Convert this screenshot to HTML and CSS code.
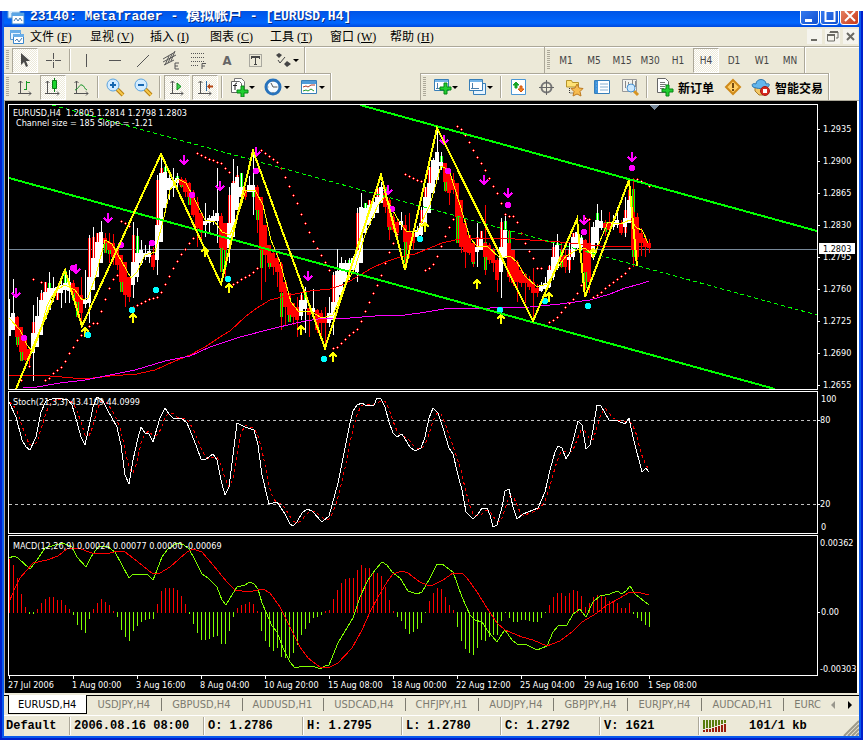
FILE: index.html
```html
<!DOCTYPE html>
<html lang="zh-CN">
  <head>
    <meta charset="UTF-8" />
    <meta name="viewport" content="width=device-width, initial-scale=1.0" />
    <title>MetaTrader - EURUSD,H4</title>
    <link rel="stylesheet" href="styles.css">
  </head>
  <body>
    <div class="window">
      <header class="titlebar">
        <svg class="app-icon" width="18" height="18" viewBox="0 0 18 18"><path d="M1 1h12v10H1z" fill="#dcefff" stroke="#5b9bd5"/><path d="M5 6h12v11H5z" fill="#fff" stroke="#3a86cc"/><path d="M5 6h12v3H5z" fill="#5aa5e6"/><path d="M7 14l2-3 2 3 2-3 2 3" fill="none" stroke="#4a7db0"/></svg>
        <h1 class="title">23140: MetaTrader - <span class="title-cn">模拟帐户</span> - [EURUSD,H4]</h1>
        <div class="window-buttons">
          <button class="win-btn" aria-label="Minimize"><svg width="16" height="16" viewBox="0 0 16 16"><path d="M3 11h7v3H3z" fill="#fff"/></svg></button>
          <button class="win-btn" aria-label="Maximize"><svg width="16" height="16" viewBox="0 0 16 16"><path d="M3.5 3v10h9V3z" fill="none" stroke="#fff" stroke-width="2"/></svg></button>
          <button class="win-btn win-close" aria-label="Close"><svg width="16" height="16" viewBox="0 0 16 16"><path d="M3 3l10 10M13 3L3 13" stroke="#fff" stroke-width="2"/></svg></button>
        </div>
      </header>

      <nav class="menubar">
        <svg class="menu-icon" width="16" height="16" viewBox="0 0 16 16"><path d="M1.5 1.5h10v9h-10z" fill="#e6f3ff" stroke="#5b9bd5"/><path d="M1 1h11v3H1z" fill="#6aaee8"/><path d="M4.5 5.5h10v9h-10z" fill="#fff" stroke="#3a86cc"/><path d="M4 5h11v3H4z" fill="#6aaee8"/><path d="M6 12l2-2 2 3 3-4" fill="none" stroke="#4a7db0"/></svg>
        <button class="menu-item">文件<span class="key">(<u>F</u>)</span></button>
        <button class="menu-item">显视<span class="key">(<u>V</u>)</span></button>
        <button class="menu-item">插入<span class="key">(<u>I</u>)</span></button>
        <button class="menu-item">图表<span class="key">(<u>C</u>)</span></button>
        <button class="menu-item">工具<span class="key">(<u>T</u>)</span></button>
        <button class="menu-item">窗口<span class="key">(<u>W</u>)</span></button>
        <button class="menu-item">帮助<span class="key">(<u>H</u>)</span></button>
        <div class="mdi-buttons">
          <button class="mdi-btn" aria-label="Minimize chart"><svg width="15" height="15" viewBox="0 0 15 15"><path d="M4 10h6v2H4z" fill="#6b6a64"/></svg></button>
          <button class="mdi-btn" aria-label="Restore chart"><svg width="15" height="15" viewBox="0 0 15 15"><path d="M5 4V3h8v6h-2" fill="none" stroke="#6b6a64"/><path d="M5 2h8v2H5zM2 5h8v2H2z" fill="#6b6a64"/><path d="M2.5 6v6h7V6" fill="none" stroke="#6b6a64"/></svg></button>
          <button class="mdi-btn" aria-label="Close chart"><svg width="15" height="15" viewBox="0 0 15 15"><path d="M4 4l7 7M11 4l-7 7" stroke="#6b6a64" stroke-width="2"/></svg></button>
        </div>
      </nav>

      <!-- drawing tools and periods -->
      <div class="toolbar-row">
        <div class="toolbar">
          <span class="grip"></span>
          <button class="tool pressed" aria-label="Cursor"><svg width="20" height="20" viewBox="0 0 20 20"><path d="M6 3v12l3-3 2 5 2-1-2-5h4z" fill="#4a4a48"/></svg></button>
          <button class="tool" aria-label="Crosshair"><svg width="20" height="20" viewBox="0 0 20 20"><path d="M10.5 3v6M10.5 12v6M3 10.5h6M12 10.5h6" stroke="#555"/><path d="M10 10h1v1h-1z" fill="#555"/></svg></button>
          <span class="sep"></span>
          <button class="tool" aria-label="Vertical line"><svg width="20" height="20" viewBox="0 0 20 20"><path d="M9.5 4v13" stroke="#555"/></svg></button>
          <button class="tool" aria-label="Horizontal line"><svg width="20" height="20" viewBox="0 0 20 20"><path d="M4 10.5h12" stroke="#555"/></svg></button>
          <button class="tool" aria-label="Trendline"><svg width="20" height="20" viewBox="0 0 20 20"><path d="M4 17L16 5" stroke="#555"/></svg></button>
          <button class="tool" aria-label="Equidistant channel"><svg width="20" height="20" viewBox="0 0 20 20"><path d="M2 9L14 2M2 12L15 5M3 15l10-5M4 15l4-9M7 13l4-9M10 11l4-10" stroke="#555"/><path d="M18 13h-4v6h4M14 16h3" fill="none" stroke="#555"/></svg></button>
          <button class="tool" aria-label="Fibonacci"><svg width="20" height="20" viewBox="0 0 20 20"><path d="M2 3.5h14M2 7.5h14M2 11.5h14M2 15.5h8" stroke="#555" stroke-dasharray="1 1"/><path d="M17 13.5h-4V19M13 16h3" fill="none" stroke="#555"/></svg></button>
          <button class="tool letter">A</button>
          <button class="tool" aria-label="Text label"><svg width="20" height="20" viewBox="0 0 20 20"><path d="M4.5 4.5h12v12h-12z" fill="none" stroke="#666" stroke-dasharray="1 1"/><path d="M6 6h9v3h-1V8h-3v6h1v1H9v-1h1V8H7v1H6z" fill="#444"/></svg></button>
          <button class="tool with-caret" aria-label="Arrows"><svg width="20" height="20" viewBox="0 0 20 20"><path d="M3 5l3-2 3 2-3 3zM11 14l3-3 4 3-4 3z" fill="#444"/><path d="M5 10l2 3 5-6" fill="none" stroke="#444"/></svg><span class="caret"></span></button>
        </div>
        <div class="toolbar-space"></div>
        <div class="toolbar periods">
          <span class="grip"></span>
          <button class="tool">M1</button>
          <button class="tool">M5</button>
          <button class="tool">M15</button>
          <button class="tool">M30</button>
          <button class="tool">H1</button>
          <button class="tool pressed">H4</button>
          <button class="tool">D1</button>
          <button class="tool">W1</button>
          <button class="tool">MN</button>
        </div>
      </div>

      <!-- chart tools and trading -->
      <div class="toolbar-row">
        <div class="toolbar lined">
          <span class="grip"></span>
          <button class="tool" aria-label="Bar chart"><svg width="20" height="20" viewBox="0 0 20 20"><path d="M5.5 4v13M3 16.5h13M3.5 6l2-2 2 2M14 14.5l2 2-2 2" fill="none" stroke="#555"/><path d="M11.500 4v9M9 12.5h2M12 5.5h3" stroke="#159b25"/></svg></button>
          <button class="tool pressed" aria-label="Candlesticks"><svg width="20" height="20" viewBox="0 0 20 20"><path d="M4.5 4v13M2 16.5h14M2.5 6l2-2 2 2M14 14.5l2 2-2 2" fill="none" stroke="#555"/><path d="M11.5 1v14" stroke="#087d13"/><path d="M9.5 3.5h4v8h-4z" fill="#19d52b" stroke="#087d13"/></svg></button>
          <button class="tool" aria-label="Line chart"><svg width="20" height="20" viewBox="0 0 20 20"><path d="M5.5 4v13M3 16.5h14M3.5 6l2-2 2 2M15 14.5l2 2-2 2" fill="none" stroke="#555"/><path d="M4 13c4-1 4-6 7-5s2 4 5 5" fill="none" stroke="#179427"/></svg></button>
          <span class="sep"></span>
          <button class="tool" aria-label="Zoom in"><svg width="20" height="20" viewBox="0 0 20 20"><path d="M12 12l6 6" stroke="#b98010" stroke-width="4"/><path d="M12 12l6 6" stroke="#f7c94b" stroke-width="2"/><circle cx="8" cy="8" r="6" fill="#d3ecff" stroke="#5aa3de" stroke-width="1"/><path d="M8 5v6M5 8h6" stroke="#1667b0" stroke-width="2"/></svg></button>
          <button class="tool" aria-label="Zoom out"><svg width="20" height="20" viewBox="0 0 20 20"><path d="M12 12l6 6" stroke="#b98010" stroke-width="4"/><path d="M12 12l6 6" stroke="#f7c94b" stroke-width="2"/><circle cx="8" cy="8" r="6" fill="#d3ecff" stroke="#5aa3de" stroke-width="1"/><path d="M5 8h6" stroke="#1667b0" stroke-width="2"/></svg></button>
          <span class="sep"></span>
          <button class="tool pressed" aria-label="Auto scroll"><svg width="20" height="20" viewBox="0 0 20 20"><path d="M5.5 4v13M3 16.5h13M3.5 6l2-2 2 2M14 14.5l2 2-2 2" fill="none" stroke="#555"/><path d="M10 6v7l4-3.500z" fill="#42d552" stroke="#0b8a19"/></svg></button>
          <button class="tool pressed" aria-label="Chart shift"><svg width="20" height="20" viewBox="0 0 20 20"><path d="M5.5 4v13M3 16.5h13M3.5 6l2-2 2 2M14 14.5l2 2-2 2" fill="none" stroke="#555"/><path d="M11.5 4v10" stroke="#276aa3"/><path d="M12 9.5l3-3v2h3v2h-3v2z" fill="#b34413"/></svg></button>
          <span class="sep"></span>
          <button class="tool with-caret" aria-label="Indicators"><svg width="20" height="20" viewBox="0 0 20 20"><path d="M5.5 1.5h7l3 3v10h-10z" fill="#fff" stroke="#777"/><path d="M2.500 4.500h8l2 2v9h-10z" fill="#fff" stroke="#666"/><path d="M8 6c-2 0-2 2-2 3v4M4 8.5h4" fill="none" stroke="#222"/><path d="M12 9h3v4h4v3h-4v4h-3v-4H8v-3h4z" fill="#20cf30" stroke="#078514"/></svg><span class="caret"></span></button>
          <button class="tool with-caret" aria-label="Periods"><svg width="20" height="20" viewBox="0 0 20 20"><circle cx="9" cy="10" r="7" fill="#f5fbff" stroke="#2873bc" stroke-width="3"/><path d="M7 6l2 4h4" fill="none" stroke="#555"/><path d="M9 4v1M9 15v1M3.500 10h1M13.500 10h1" stroke="#777"/></svg><span class="caret"></span></button>
          <button class="tool with-caret" aria-label="Templates"><svg width="20" height="20" viewBox="0 0 20 20"><path d="M2.5 3.5h15v13h-15z" fill="#fff" stroke="#377eb8"/><path d="M3 4h14v3H3z" fill="#4f9bd9"/><path d="M4 10l3-1 2 1 3-2h4" fill="none" stroke="#b13b28"/><path d="M4 14l3-1 2 1 3-2 3 2" fill="none" stroke="#219b2c"/></svg><span class="caret"></span></button>
        </div>
        <div class="toolbar-gap"></div>
        <div class="toolbar lined divided">
          <span class="grip"></span>
          <button class="tool with-caret" aria-label="New chart"><svg width="20" height="20" viewBox="0 0 20 20"><path d="M2.5 2.5h14v11h-14z" fill="#fff" stroke="#377eb8"/><path d="M3 3h13v2H3z" fill="#75b5e8"/><path d="M5.5 6v6M4 11.5h8" stroke="#4b7eac"/><path d="M12 6h3v4h4v3h-4v4h-3v-4H8v-3h4z" fill="#20cf30" stroke="#078514"/></svg><span class="caret"></span></button>
          <button class="tool with-caret" aria-label="Profiles"><svg width="20" height="20" viewBox="0 0 20 20"><path d="M6.5 6.5h12v11h-12z" fill="#e7f4ff" stroke="#377eb8"/><path d="M2.5 2.5h13v11h-13z" fill="#fff" stroke="#377eb8"/><path d="M3 3h12v2H3z" fill="#75b5e8"/><path d="M5.5 6v6M4 11.5h8" stroke="#4b7eac"/></svg><span class="caret"></span></button>
          <span class="sep"></span>
          <button class="tool" aria-label="Market watch"><svg width="20" height="20" viewBox="0 0 20 20"><path d="M3.5 2.5h14v15h-14z" fill="#fff" stroke="#4b97d5"/><path d="M8 5l3 3H9v3H7V8H5z" fill="#18a426" stroke="#18a426"/><path d="M12 9h2v3h2l-3 3-3-3h2z" fill="#f28425" stroke="#d4540e"/></svg></button>
          <button class="tool" aria-label="Data window"><svg width="20" height="20" viewBox="0 0 20 20"><circle cx="10.5" cy="10.5" r="5" fill="none" stroke="#777" stroke-width="2"/><path d="M10.5 3v15M3 10.5h15" stroke="#666"/></svg></button>
          <button class="tool" aria-label="Navigator"><svg width="20" height="20" viewBox="0 0 20 20"><path d="M2.5 10V3.5h5l1 2h6V10z" fill="#ffe274" stroke="#b59328"/><path d="M5.5 11v5H9" fill="none" stroke="#333" stroke-dasharray="1 1"/><path d="M13 7l2 4 4 .5-3 3 1 4.500-4-2-4 2 1-4.500-3-3 4-.5z" fill="#f7bc50" stroke="#bd7a20"/></svg></button>
          <button class="tool" aria-label="Terminal"><svg width="20" height="20" viewBox="0 0 20 20"><path d="M2.5 3.5h15v13h-15z" fill="#fff" stroke="#377eb8"/><path d="M3 4h3v12H3z" fill="#3c92dc"/><path d="M4 6h1M4 9h1M4 12h1M8 7h8M8 10h8M8 13h8" stroke="#86afd1"/></svg></button>
          <button class="tool" aria-label="Strategy tester"><svg width="20" height="20" viewBox="0 0 20 20"><path d="M2.5 2.5h14v12h-14z" fill="#f3f3ee" stroke="#999"/><path d="M5.5 4v7M8.5 5v6M12.5 3v6M15.5 4v6" stroke="#888"/><path d="M14 14l4 4" stroke="#d79421" stroke-width="3"/><circle cx="11" cy="11" r="4" fill="#cbe8ff" stroke="#4b92ce"/></svg></button>
          <span class="sep"></span>
          <button class="tool labelled"><svg width="20" height="20" viewBox="0 0 20 20"><path d="M3.5 1.5h8l3 3v11h-11z" fill="#fff" stroke="#666"/><path d="M6 5.5h5M6 7.5h6M6 9.500h5M6 11.500h4" stroke="#777"/><path d="M12 8h3v4h4v3h-4v4h-3v-4H8v-3h4z" fill="#20cf30" stroke="#078514"/></svg><span>新订单</span></button>
          <button class="tool" aria-label="MetaEditor"><svg width="20" height="20" viewBox="0 0 20 20"><path d="M10 3l7 7-7 7-7-7z" fill="#ffcf67" stroke="#cf8a1a" stroke-width="2"/><path d="M9 6h2v5H9zM9 12h2v2H9z" fill="#744a10"/></svg></button>
          <button class="tool labelled"><svg width="20" height="20" viewBox="0 0 20 20"><path d="M4 9h12v5l-4 4H8l-4-4z" fill="#f3c866" stroke="#a97b28"/><path d="M5 7c0-6 10-6 10 0 4-1 4 1 2 3-5 2-10 2-15 0-2-3 0-4 3-3z" fill="#63b6ed" stroke="#3077ae"/><circle cx="14" cy="14" r="4.500" fill="#d7271d" stroke="#a31913"/><path d="M12 12h4v4h-4z" fill="#fff"/></svg><span>智能交易</span></button>
        </div>
      </div>

      <main class="chart-area">
        <svg class="chart" viewBox="6 102 851 591">
          <defs>
            <clipPath id="main-clip"><path d="M9 105h808v284H9z"/></clipPath>
          </defs>
          <g class="price-panel" clip-path="url(#main-clip)">
            <path class="price-line" d="M9 249.500h808"/>
            <g id="candles"></g>
            <polyline class="ma-fast" points="9,318 20,330 27,345 33,352 40,332 47,306 55,291 65,285 75,290 82,300 88,298 96,275 105,240 112,244 122,262 131,278 137,272 145,255 155,252 164,217 170,190 178,179 186,183 195,200 205,220 215,222 222,232 230,235 238,215 246,190 255,190 263,205 271,240 280,262 291,302 299,312 310,311 322,318 333,315 345,285 355,268 365,235 378,205 385,196 397,218 406,231 417,232 430,205 441,166 449,170 460,205 470,238 477,246 487,246 500,258 510,256 517,262 525,276 537,287 547,284 556,270 566,256 577,250 585,248 594,256 602,236 608,222 620,224 630,220 637,228 642,230 648,243"/>
            <polyline class="ma-red" points="9,375 50,376 85,379 110,376 137,374 155,370 175,361 190,355 205,347 220,337 230,331 245,317 257,308 270,300 290,295 310,291 330,289 345,284 360,275 372,268 385,262 400,257 415,254 430,248 442,243 455,240 470,238 500,238 530,240 560,242 580,244 600,246 625,246 649,247"/>
            <polyline class="ma-slow" points="23,388 37,387 60,383 85,380 105,376 135,370 165,361 190,356 210,347 240,337 275,328 305,321 325,318 350,318 375,316 405,315 420,313 450,308 490,308 530,307 560,304 590,300 610,294 625,288 640,284 649,281"/>
            <g id="sar"></g>
            <g id="marks"></g>
            <path class="channel" d="M360 105L817 231M9 178L775 389"/>
            <path class="channel-mid" d="M52 105L817 315"/>
            <polyline class="zigzag" points="16,389 65,270 82,326 161,154 221,284 253,151 325,348 381,175 405,270 437,128 533,321 577,219 585,297 629,180 637,266"/>
            <path d="M649 105h10l-5 5z" fill="#778899"/>
          </g>
          <g>
            <path class="level" d="M9 420.500h808M9 504.500h808"/>
            <polyline id="stoch-signal" class="signal"/>
            <polyline id="stoch" class="stoch"/>
          </g>
          <g>
            <g id="histogram"></g>
            <polyline class="macd" points="9,558 14,556 18,558 30,569 37,560 45,548 55,545 63,543 72,547 77,557 86,567 91,557 98,547 107,546 115,552 122,565 129,578 133,574 147,574 153,580 157,570 162,557 168,549 177,543 184,545 189,549 195,560 202,574 208,578 217,587 222,600 226,605 230,598 237,587 245,585 250,582 254,584 258,589 262,603 266,612 272,626 277,632 283,648 290,662 295,668 303,666 315,667 321,669 325,666 329,665 338,643 347,628 353,618 360,597 368,580 375,570 382,562 387,565 392,572 400,578 408,591 417,594 422,592 430,578 437,564 442,564 453,572 462,597 470,615 475,620 482,622 487,630 497,642 502,634 505,630 512,640 517,644 525,644 537,650 547,646 553,632 558,626 567,625 573,614 580,609 586,617 593,602 600,596 610,594 617,591 622,594 627,590 630,586 635,594 649,605"/>
            <polyline class="macd-signal" points="10,600 15,588 20,578 27,570 33,563 47,560 58,556 68,548 78,548 92,553 110,553 118,551 125,552 133,558 153,574 160,573 170,567 187,552 193,549 202,552 213,565 227,582 235,590 242,591 253,591 263,589 270,593 280,607 293,633 300,647 308,658 320,667 330,667 338,663 352,648 362,630 370,612 378,597 387,582 393,574 402,571 408,573 420,582 427,585 433,585 443,580 453,573 462,573 467,578 477,592 487,608 497,623 505,630 522,637 533,640 547,646 560,641 572,632 582,622 597,613 607,605 620,598 628,593 637,592 649,595"/>
          </g>
          <path class="frame" d="M8.500 104.500h809v285h-809zM8.500 391.500h809v142h-809zM8.500 535.500h809v140h-809z"/>
          <g id="axis"></g>
          <g class="chart-text">
            <text x="13" y="116">EURUSD,H4&#160; 1.2805 1.2814 1.2798 1.2803</text>
            <text x="16" y="126">Channel size = 185 Slope = -1.21</text>
            <text x="13" y="405">Stoch(21,3,3) 43.4109 44.0999</text>
            <text x="13" y="549">MACD(12,26,9) 0.00024 0.00077 0.00000 -0.00069</text>
          </g>
        </svg>
      </main>

      <nav class="tabbar">
        <div class="tabs">
          <a class="tab active" href="#eurusd">EURUSD,H4</a>
          <a class="tab" href="#usdjpy">USDJPY,H4</a>
          <a class="tab" href="#gbpusd">GBPUSD,H4</a>
          <a class="tab" href="#audusd">AUDUSD,H1</a>
          <a class="tab" href="#usdcad">USDCAD,H4</a>
          <a class="tab" href="#chfjpy">CHFJPY,H1</a>
          <a class="tab" href="#audjpy">AUDJPY,H4</a>
          <a class="tab" href="#gbpjpy">GBPJPY,H4</a>
          <a class="tab" href="#eurjpy">EURJPY,H4</a>
          <a class="tab" href="#audcad">AUDCAD,H1</a>
          <a class="tab" href="#eurc">EURC</a>
        </div>
        <div class="tab-scroll">
          <button class="scroll-btn" aria-label="Scroll left"><svg width="8" height="8" viewBox="0 0 8 8"><path d="M6 0v8L2 4z" fill="#99978d"/></svg></button>
          <button class="scroll-btn" aria-label="Scroll right"><svg width="8" height="8" viewBox="0 0 8 8"><path d="M2 0v8l4-4z" fill="#000"/></svg></button>
        </div>
      </nav>

      <footer class="statusbar">
        <span class="status profile">Default</span>
        <span class="status date">2006.08.16 08:00</span>
        <span class="status">O: 1.2786</span>
        <span class="status">H: 1.2795</span>
        <span class="status">L: 1.2780</span>
        <span class="status">C: 1.2792</span>
        <span class="status">V: 1621</span>
        <div class="status traffic">
          <svg width="24" height="13" viewBox="0 0 24 13"><path d="M0 0h2v9H0zM3 0h2v8H3zM6 0h2v8H6zM9 0h2v7H9zM12 0h2v6h-2zM15 0h2v5h-2zM18 0h2v4h-2zM21 0h2v3h-2z" fill="#5a7d0c"/><path d="M0 10h2v2H0zM3 9h2v3H3zM6 9h2v3H6zM9 8h2v4H9zM12 7h2v5h-2zM15 6h2v6h-2zM18 5h2v7h-2zM21 4h2v8h-2z" fill="#9a1c0c"/></svg>
          <span>101/1 kb</span>
        </div>
        <svg class="resize" width="16" height="16" viewBox="0 0 16 16"><path d="M1 16L16 1M5 16L16 5M9 16l7-7M13 16l3-3" stroke="#9d9a8a" stroke-width="2"/></svg>
      </footer>
    </div>
    <script src="chart.js"></script>
  </body>
</html>
```
FILE: styles.css
```css
* {
  box-sizing: border-box;
}

body {
  margin: 0;
  padding-top: 11px;
  background: #fff;
  font-family: "DejaVu Sans Condensed", "DejaVu Sans", "Noto Sans CJK SC", sans-serif;
  font-size: 11px;
}

button {
  border: 0;
  padding: 0;
  background: none;
  font: inherit;
  color: inherit;
}

svg {
  display: block;
  flex: none;
}

.window {
  display: flex;
  flex-direction: column;
  height: calc(100vh - 11px);
  padding: 0 4px 4px;
  background: #0a5aec;
  box-shadow: inset 2px 0 #0020cc, inset -2px -2px #0020cc;
}

.titlebar {
  display: flex;
  align-items: center;
  flex: none;
  height: 16px;
  padding-left: 3px;
  overflow: hidden;
  background: linear-gradient(#0054e6, #0066ff 75%, #0048dc);
}

.title {
  flex: 1;
  margin: 0 0 0 5px;
  font: bold 13px/16px "Liberation Mono", "Noto Sans CJK SC", monospace;
  padding-bottom: 6px;
  color: #fff;
  white-space: pre;
  text-shadow: 1px 1px #0a2a80;
}

.title-cn {
  font-size: 14px;
}

.app-icon {
  margin-bottom: 6px;
}

.window-buttons {
  display: flex;
  gap: 1px;
  margin-bottom: 8px;
}

.win-btn {
  width: 19px;
  height: 20px;
  padding: 2px 1px;
  border: 1px solid #fff;
  border-radius: 3px;
  background: linear-gradient(135deg, #3c81f3, #0f4fd0);
}

.win-close {
  background: linear-gradient(135deg, #e98a6a, #c8391a);
}

.menubar,
.toolbar-row,
.tabbar,
.statusbar {
  flex: none;
  background: #ece9d8;
}

.menubar {
  display: flex;
  align-items: center;
  height: 19px;
  padding-left: 5px;
}

.menu-icon {
  margin-right: 5px;
}

.menu-item {
  width: 60px;
  text-align: left;
  font: 12px/18px "Noto Sans CJK SC", sans-serif;
  white-space: nowrap;
}

.key {
  margin-left: 3px;
  font: 12px/18px "Liberation Serif", serif;
}

.mdi-buttons {
  display: flex;
  gap: 3px;
  margin-left: auto;
  padding-right: 1px;
}

.mdi-btn {
  width: 15px;
  background: #f5f4ee;
}

.toolbar-row {
  display: flex;
  height: 27px;
  color: #444;
}

.menubar + .toolbar-row {
  border-top: 1px solid #aca899;
  box-shadow: inset 0 1px #fff;
}

.toolbar {
  display: flex;
  align-items: center;
  border-right: 1px solid #aca899;
  box-shadow: 1px 0 #fff;
}

.toolbar.lined {
  border-top: 1px solid #aca899;
  box-shadow: 1px 0 #fff, inset 0 1px #fff;
}

.periods,
.divided {
  border-left: 1px solid #aca899;
}

.toolbar-space {
  flex: 1;
  max-width: 239px;
}

.toolbar-gap {
  flex: 1;
  max-width: 89px;
}

.grip {
  width: 3px;
  height: 20px;
  margin: 0 2px;
  background: repeating-linear-gradient(#aca899 0 1px, #ece9d8 1px 2px);
}

.sep {
  width: 2px;
  height: 22px;
  margin: 0 2px;
  border-left: 1px solid #aca899;
  border-right: 1px solid #fff;
}

.tool {
  display: flex;
  align-items: center;
  justify-content: center;
  width: 28px;
  height: 25px;
}

.pressed {
  width: 26px;
  height: 25px;
  margin: 0 1px;
  border: 1px solid;
  border-color: #aca899 #fff #fff #aca899;
  background: repeating-conic-gradient(#fff 0 25%, #ece9d8 0 50%) 0 0 / 2px 2px;
}

.letter {
  font: bold 13px "DejaVu Sans Condensed", sans-serif;
  color: #666;
}

.periods .tool {
  font-size: 10px;
}

.with-caret {
  width: 35px;
  justify-content: flex-start;
  padding-left: 4px;
}

.caret {
  border: solid transparent;
  border-width: 3px 3px 0;
  border-top-color: #000;
}

.labelled {
  width: auto;
  gap: 4px;
  padding: 0 5px 0 4px;
  font: bold 12px "Noto Sans CJK SC", sans-serif;
  color: #000;
}

.chart-area {
  flex: 1;
  min-height: 0;
  padding: 2px 2px 0;
  background: #000;
  box-shadow: inset 1px 1px #aca899, inset -2px 0 #fff;
}

.chart {
  width: 100%;
  height: 100%;
  shape-rendering: crispEdges;
}

.chart polyline {
  fill: none;
  stroke-width: 1;
}

.frame {
  fill: none;
  stroke: #fff;
}

.price-line {
  stroke: #778899;
}

.chart .ma-fast {
  stroke: #ff0;
}

.chart .ma-red,
.chart .macd-signal {
  stroke: #f00;
}

.chart .ma-slow {
  stroke: #f0f;
}

.chart .zigzag {
  stroke: #ff0;
  stroke-width: 2;
}

.channel {
  stroke: #0f0;
  stroke-width: 2;
}

.channel-mid {
  stroke: #0f0;
  stroke-dasharray: 4 3;
}

.level {
  stroke: #c0c0c0;
  stroke-dasharray: 3 3;
}

.chart .stoch {
  stroke: #fff;
}

.chart .signal {
  stroke: #f00;
  stroke-dasharray: 3 3;
}

.chart .macd {
  stroke: #7fff00;
}

.chart-text,
#axis {
  font-size: 9px;
  fill: #fff;
}

.tabbar {
  display: flex;
  height: 23px;
  padding: 0 0 2px 4px;
  box-shadow: inset 0 2px #ece9d8, inset 0 3px #000, inset 0 -1px #fff;
}

.tabs {
  display: flex;
  align-items: center;
  flex: 1;
  min-width: 0;
  overflow: hidden;
  padding-top: 2px;
}

.tab {
  flex: none;
  padding: 0 11px 0 10px;
  border-right: 1px solid #7d7b70;
  line-height: 13px;
  color: #7d7b70;
  text-decoration: none;
}

.tab:last-child {
  border-right: 0;
  padding-right: 0;
}

.tab.active {
  align-self: stretch;
  padding: 2px 10px 0 9px;
  border: solid #000;
  border-width: 0 1px 1px;
  background: #fff;
  line-height: 16px;
  color: #000;
}

.tab-scroll {
  display: flex;
  align-items: center;
  gap: 9px;
  padding: 2px 5px 0 4px;
}

.scroll-btn {
  width: 8px;
}

.statusbar {
  display: flex;
  align-items: center;
  height: 20px;
  padding-left: 2px;
  font: bold 12px/18px "Liberation Mono", monospace;
  white-space: nowrap;
}

.status {
  width: 99px;
  padding-left: 4px;
  border-left: 1px solid #aca899;
  box-shadow: inset 1px 0 #fff;
}

.profile {
  width: 63px;
  padding-left: 0;
  border-left: 0;
  box-shadow: none;
}

.date {
  width: 134px;
}

.traffic {
  display: flex;
  align-items: center;
  flex: 1;
  gap: 22px;
}

.resize {
  align-self: flex-end;
}
```
FILE: chart.js
```js
const FIRST_X = 9;
const STEP = 4;

// body colour, body top, body bottom, high, low, then the plain bar: colour, top, bottom
const candles = `w 317 336 299 336|w 313 330 279 330|r 317 337 316 347 g 337 345|r 327 352 327 361 g 352 361|r 338 360 338 361|r 349 358 348 366|w 333 353 305 381 r 322 333|w 316 347 297 347|w 300 335 290 335 r 293 300|w 292 319 282 319 r 282 292
w 288 310 272 310 g 283 288|w 288 297 277 302|w 287 293 286 300 r 290 300|w 285 293 278 308|w 283 290 271 303 g 271 283|w 282 291 270 303|r 283 293 280 300 g 293 300|r 287 302 287 317 g 302 317|r 295 313 277 323|w 300 304 270 308
w 277 303 235 323 r 238 277|w 258 290 227 290 r 237 258|w 242 277 233 277 r 233 242|w 232 263 221 263|r 238 243 233 253 g 243 253|r 242 250 233 263 g 250 254|r 243 257 234 265|r 248 265 248 270 g 260 265|r 255 282 255 292 g 277 292|r 262 295 262 307
r 277 297 277 302|w 262 285 222 298 r 235 262|w 253 277 228 282 g 236 253|w 250 263 240 265|w 253 257 245 260|w 251 257 243 263|r 255 267 247 270|w 225 260 175 275 r 180 225|w 173 242 154 242 r 168 173|w 172 208 166 208 g 167 180
w 178 190 170 200|w 180 188 168 197|w 178 183 173 188 g 176 180|r 179 185 177 188 g 182 187|r 180 192 178 197|r 183 197 182 205 g 192 205|r 192 215 190 217|r 202 228 197 247|r 213 232 213 242 g 228 233|w 221 225 203 237
w 218 223 215 232|w 216 222 210 225|w 213 221 168 243|r 216 248 213 272 g 248 272|r 223 250 223 277 g 250 267|w 223 248 187 263 r 195 223|w 183 237 159 237 r 181 185|w 177 210 166 210 r 175 178|w 187 197 173 197 g 173 187|r 190 197 187 200
w 185 192 176 192|w 185 192 153 215 g 188 197|r 187 210 185 233 g 208 220|r 197 250 197 300 g 250 268|r 225 255 225 282 g 245 255|r 245 263 245 269 g 260 267|r 253 267 250 275|r 258 272 253 287|r 264 292 262 330 g 293 317|r 282 307 282 325
r 293 315 293 322 g 313 322|r 303 317 303 325|r 307 320 297 337|w 300 316 292 320 r 295 300|w 300 309 287 333 g 292 308|r 308 315 303 337|w 308 312 289 313|r 310 330 309 333|r 313 323 310 337|r 318 323 307 347
w 313 323 297 327 r 318 323|w 302 320 272 335 r 275 302|w 271 307 249 307|w 263 295 257 295|w 263 282 260 282|w 263 270 258 280 g 260 263|w 258 270 256 272|w 250 272 208 282 r 213 250|w 207 263 193 263|w 208 233 203 233 g 203 210
w 205 225 200 225 r 200 205|w 202 218 198 218|w 197 213 187 213 r 188 197|w 187 203 182 203|r 193 207 187 213 g 187 193|r 200 227 198 240 g 225 230|r 217 230 214 232|r 222 233 220 235|w 221 225 212 230|r 225 242 215 263 g 242 263
r 232 250 213 258|r 233 243 233 250|w 230 237 226 240|w 223 235 207 238 r 210 223|w 197 223 187 223 r 187 197|w 183 213 167 213 r 167 183|w 160 193 158 193|w 152 180 130 180|w 162 166 152 170 g 156 168|r 163 182 163 192 g 182 191
r 172 193 172 205|r 180 190 173 194|r 183 217 183 243 g 215 243|r 200 247 200 253|r 223 252 218 268|r 235 253 235 255|r 243 262 243 267 g 260 264|w 247 252 223 267 r 237 247|w 238 250 231 250 r 231 238|r 243 257 205 275 g 242 270
r 245 260 243 264|r 250 263 248 272|r 260 280 258 292|w 247 272 218 298 r 222 247|w 230 258 215 258 g 221 230|r 243 277 230 282 g 231 247|r 250 283 250 286|r 262 282 260 302|r 270 283 268 287|r 275 283 273 303 g 274 278
r 279 287 276 290|r 282 293 268 318|r 288 293 284 297|w 285 291 282 292|w 283 289 277 291|w 270 287 265 288 r 266 272|w 257 277 243 280 r 247 257|w 245 268 234 270 g 243 248|r 256 262 243 268 g 250 267|r 255 267 250 273
w 257 260 243 273 r 250 270|w 237 257 233 260 r 233 238|w 232 248 228 250|w 238 247 235 250 g 237 247|r 240 272 239 290 g 272 288|r 243 282 222 293|w 227 257 222 260|w 220 243 204 245 g 213 220|w 221 228 210 230|r 223 228 220 236 g 222 232
r 223 230 212 234|w 222 227 215 230|w 220 225 207 228|r 223 233 220 235 g 225 232|w 218 227 197 237 r 210 233|w 200 223 180 223 r 190 200|r 212 250 180 267 g 189 257|r 217 257 213 260|r 233 243 228 256|r 238 247 235 257
r 243 248 239 253`.split(/[|\n]/);

const histogram = [
  54, 48, 35, 19, 6, -1, -1, 4, 10, 14, 16, 16, 13, 13, 8, 4, -2, -12, -17, -20,
  -6, 4, 10, 14, 11, 8, 2, -4, -17, -24, -28, -18, -13, -9, -7, -6, -6, 9, 22, 25,
  25, 25, 23, 17, 9, -1, -11, -20, -27, -27, -26, -24, -23, -31, -31, -18, -4, 5, 8, 9,
  11, 9, 2, -18, -28, -34, -38, -35, -44, -45, -45, -40, -32, -22, -16, -10, -5, -4, -2, 2,
  3, 14, 23, 30, 34, 35, 35, 43, 48, 45, 45, 41, 40, 37, 26, 13, 2, -4, -8, -16,
  -21, -19, -16, -10, 0, 12, 20, 25, 24, 16, 8, 3, -14, -28, -36, -40, -42, -35, -27, -28,
  -24, -22, -22, -8, 0, -5, -9, -9, -7, -7, -8, -9, -9, -5, 0, 8, 16, 20, 20, 17,
  20, 23, 22, 17, 6, 10, 16, 18, 17, 16, 12, 12, 10, 5, 5, 10, -1, -5, -8, -12, -14
];

// parabolic SAR: start x, then one y for each bar
const sar = [
  [21, 380], [29, 366], [33, 279], [41, 282],
  [45, 380, 378, 373, 370, 367, 361, 353, 347, 340, 335, 330, 326, 323, 323, 311, 299, 288, 279, 275],
  [121, 221, 223, 226],
  [133, 307, 305, 303, 301, 299, 298, 297, 292, 284, 276, 268, 261, 254, 249, 243, 238],
  [197, 153, 155, 157, 159, 160, 162, 163, 168, 172],
  [233, 284, 282, 279, 277, 275, 272, 268],
  [261, 150, 153, 156, 159, 162, 168, 177, 186, 195, 203, 214, 223, 232, 241, 248, 255, 262, 270],
  [333, 348, 347, 343, 339, 335, 332, 329, 321, 311, 302, 293, 285, 275, 263, 252, 243, 234],
  [405, 174, 176, 178, 180, 181],
  [425, 270, 268, 264, 256, 246, 236, 227, 219],
  [457, 126, 129, 135, 142, 150, 157, 163, 170, 178, 186, 193, 203, 214, 216, 216, 222, 233, 243, 251, 258, 268, 268],
  [549, 322, 320, 317, 312, 307, 303, 299, 293, 285],
  [585, 218, 219],
  [593, 297, 295, 292, 288, 285, 282, 279, 276, 273, 268],
  [633, 179, 179, 181, 183, 186]
];

const sells = [[16, 293], [76, 269], [108, 218], [184, 160], [220, 186], [256, 152], [308, 276], [388, 190], [444, 140], [484, 180], [508, 193], [584, 220], [632, 157]];
const buys = [[85, 332], [133, 318], [205, 252], [229, 288], [301, 330], [333, 357], [425, 227], [477, 284], [501, 319], [549, 297], [593, 253]];
const tops = [[24, 338], [73, 268], [121, 245], [152, 243], [192, 195], [256, 171], [392, 209], [448, 171], [508, 205], [584, 232], [632, 168]];
const bottoms = [[88, 335], [132, 310], [156, 290], [228, 279], [324, 359], [420, 239], [500, 310], [545, 301], [588, 306]];

const stoch = [
  [9, 402], [16, 417], [22, 440], [26, 447], [30, 450], [36, 437], [41, 412], [46, 401], [55, 398], [68, 400], [72, 405], [77, 422], [81, 437], [85, 445], [90, 422], [93, 407], [97, 397], [103, 401], [107, 409], [117, 427], [121, 445], [125, 475], [129, 484], [133, 460], [138, 438], [141, 427], [145, 433], [149, 434], [153, 442], [157, 428], [160, 418], [165, 408], [169, 414], [173, 418], [181, 418], [187, 423], [192, 435], [197, 448], [201, 459], [205, 460], [213, 454], [217, 460], [221, 480], [225, 495], [229, 487], [233, 455], [237, 423], [245, 427], [254, 430], [258, 445], [262, 475], [269, 504], [277, 502], [285, 514], [290, 524], [293, 526], [297, 522], [302, 513], [307, 509], [312, 511], [322, 522], [329, 516], [338, 483], [345, 448], [350, 423], [353, 411], [357, 405], [362, 403], [365, 405], [374, 405], [377, 398], [381, 399], [385, 407], [389, 422], [393, 433], [397, 437], [402, 434], [410, 447], [415, 451], [421, 448], [425, 437], [429, 418], [433, 408], [438, 413], [443, 428], [449, 448], [453, 454], [458, 475], [462, 490], [466, 512], [473, 519], [478, 514], [482, 508], [487, 508], [490, 515], [493, 527], [497, 525], [502, 507], [505, 491], [509, 489], [513, 507], [517, 519], [523, 514], [533, 510], [538, 508], [545, 492], [550, 470], [555, 452], [558, 446], [562, 448], [566, 459], [570, 452], [575, 433], [578, 421], [582, 425], [586, 449], [590, 445], [593, 430], [597, 405], [601, 406], [609, 420], [618, 421], [625, 424], [629, 418], [633, 437], [642, 472], [646, 468], [649, 472]
];

const dates = ["27 Jul 2006", "1 Aug 00:00", "3 Aug 16:00", "8 Aug 04:00", "10 Aug 20:00", "15 Aug 08:00", "18 Aug 00:00", "22 Aug 12:00", "25 Aug 04:00", "29 Aug 16:00", "1 Sep 08:00"];
const prices = ["1.2935", "1.2900", "1.2865", "1.2830", "1.2795", "1.2760", "1.2725", "1.2690", "1.2655"];

const colors = { w: "#fff", r: "#f00", g: "#0f0" };

function rect(x, y, w, h, fill) {
  return `<rect x="${x}" y="${y}" width="${w}" height="${h}" fill="${fill}"/>`;
}

function put(id, markup) {
  document.getElementById(id).innerHTML = markup;
}

function drawCandles() {
  let out = "";
  candles.forEach((line, i) => {
    const [kind, top, bottom, high, low, bar, barTop, barBottom] = line.trim().split(" ");
    const x = FIRST_X + i * STEP;
    if (bar) {
      out += rect(x - 1, +barTop, 3, barBottom - barTop, colors[bar]);
    }
    out += rect(x, +high, 1, low - high, colors[kind]);
    out += rect(x - 2, +top, 4, bottom - top, colors[kind]);
  });
  put("candles", out);
}

function drawSar() {
  let out = "";
  sar.forEach(([start, ...ys]) => {
    ys.forEach((y, i) => {
      const x = start + i * STEP;
      out += rect(x - 1, y, 3, 1, "#f00") + rect(x, y - 1, 1, 3, "#f00") + rect(x, y, 1, 1, "#fff");
    });
  });
  put("sar", out);
}

function drawMarks() {
  let out = "";
  sells.forEach(([x, y]) => {
    out += `<path d="M${x} ${y - 5}v8M${x - 4} ${y}l4 4l4 -4" fill="none" stroke="#f0f" stroke-width="2"/>`;
  });
  buys.forEach(([x, y]) => {
    out += `<path d="M${x} ${y + 5}v-8M${x - 4} ${y}l4 -4l4 4" fill="none" stroke="#ff0" stroke-width="2"/>`;
  });
  tops.forEach(([x, y]) => {
    out += `<circle cx="${x}" cy="${y}" r="3" fill="#f0f"/>`;
  });
  bottoms.forEach(([x, y]) => {
    out += `<circle cx="${x}" cy="${y}" r="3" fill="#0ff"/>`;
  });
  put("marks", out);
}

function valueAt(x) {
  if (x <= stoch[0][0]) return stoch[0][1];
  const i = stoch.findIndex((p) => p[0] >= x);
  const [x0, y0] = stoch[i - 1];
  const [x1, y1] = stoch[i];
  return y0 + ((y1 - y0) * (x - x0)) / (x1 - x0);
}

function drawStoch() {
  document.getElementById("stoch").setAttribute("points", stoch.join(" "));
  const signal = [];
  for (let x = FIRST_X; x <= 649; x += STEP) {
    const y = (valueAt(x) + valueAt(x - STEP) + valueAt(x - 2 * STEP)) / 3;
    signal.push([x, Math.round(y)]);
  }
  document.getElementById("stoch-signal").setAttribute("points", signal.join(" "));
}

function drawHistogram() {
  let out = "";
  histogram.forEach((v, i) => {
    const x = FIRST_X + i * STEP;
    out += v > 0 ? rect(x, 613 - v, 1, v, "#f00") : rect(x, 612, 1, -v + 1, "#7fff00");
  });
  put("histogram", out);
}

function label(x, y, text, fill = "#fff") {
  return `<text x="${x}" y="${y}" fill="${fill}">${text}</text>`;
}

function drawAxis() {
  let out = "";
  prices.forEach((price, i) => {
    const y = 129 + i * 32;
    out += rect(818, y, 2, 1, "#fff") + label(823, y + 3, price);
  });
  out += rect(819, 243, 36, 11, "#fff") + label(823, 252, "1.2803", "#000");
  out += label(821, 402, "100") + label(820, 423, "80") + label(820, 507, "20") + label(821, 530, "0");
  out += label(820, 546, "0.00362") + label(821, 615, "0.00") + label(820, 672, "-0.00303");
  [420, 504, 612].forEach((y) => {
    out += rect(818, y, 2, 1, "#fff");
  });
  dates.forEach((date, i) => {
    const x = FIRST_X + i * 64;
    out += rect(x, 676, 1, 3, "#fff") + label(x - 1, 688, date);
  });
  put("axis", out);
}

drawCandles();
drawSar();
drawMarks();
drawStoch();
drawHistogram();
drawAxis();
```
